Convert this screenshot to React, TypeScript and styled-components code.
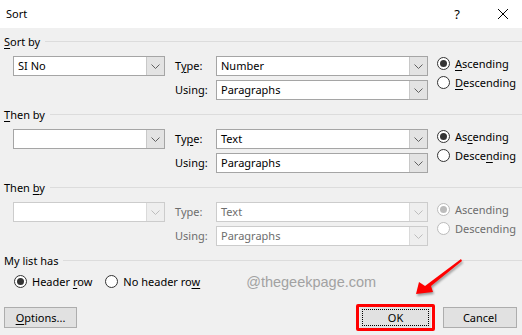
import { FunctionComponent, ReactNode } from 'react'
import styled, { createGlobalStyle } from 'styled-components'

const GlobalStyle = createGlobalStyle`
  html, body { margin: 0; padding: 0; background: #f0f0f0; }
  body { font-family: 'Noto Sans', 'Open Sans', sans-serif; font-size: 11px; color: #000; }
`

const Dialog = styled.div`
  position: relative;
  width: 522px;
  height: 335px;
  background: #f0f0f0;
  overflow: hidden;
`

const TitleBar = styled.div`
  height: 28px;
  background: #fff;
  display: flex;
  align-items: center;
  padding-left: 6px;
  box-sizing: border-box;
`

const TitleText = styled.div`
  flex: 1;
  line-height: 14px;
`

const TitleButton = styled.div<{ $mr: number }>`
  width: 16px;
  height: 16px;
  display: flex;
  align-items: center;
  justify-content: center;
  margin-right: ${(p) => p.$mr}px;
  font-size: 13px;
`

const Body = styled.div`
  padding-top: 7px;
`

const Section = styled.div`
  margin-bottom: 8px;
`

const GroupHeader = styled.div`
  display: flex;
  align-items: center;
  height: 14px;
  padding-left: 4px;
  margin-bottom: 7px;
  line-height: 14px;
  white-space: nowrap;
  &::after {
    content: '';
    flex: 1;
    height: 1px;
    background: #dcdcdc;
    margin-left: 5px;
    margin-top: -1px;
  }
`

const KeyRow = styled.div`
  display: grid;
  grid-template-columns: 161px 42px 212px auto;
  grid-template-rows: 20px 20px;
  row-gap: 4px;
  padding-left: 13px;
  align-items: center;
`

const FieldLabel = styled.div<{ $disabled?: boolean }>`
  color: ${(p) => (p.$disabled ? '#6d6d6d' : '#000')};
  padding-left: 1px;
  line-height: 14px;
`

const Combo = styled.div<{ $disabled?: boolean; $w?: number }>`
  display: flex;
  width: ${(p) => (p.$w ? `${p.$w}px` : 'auto')};
  height: 20px;
  box-sizing: border-box;
  border: 1px solid ${(p) => (p.$disabled ? '#cccccc' : '#a5a5a5')};
  background: #fff;
  color: ${(p) => (p.$disabled ? '#6d6d6d' : '#000')};
`

const ComboText = styled.div`
  flex: 1;
  padding-left: 4px;
  line-height: 18px;
  white-space: nowrap;
  overflow: hidden;
`

const ComboArrow = styled.div<{ $disabled?: boolean }>`
  width: 17px;
  display: flex;
  align-items: center;
  justify-content: center;
  background: ${(p) => (p.$disabled ? '#eeeeee' : '#e3e3e3')};
  border-left: 1px solid ${(p) => (p.$disabled ? '#dadada' : '#c8c8c8')};
`

const RadioCol = styled.div`
  grid-column: 4;
  grid-row: 1 / span 2;
  align-self: start;
  display: flex;
  flex-direction: column;
  gap: 5px;
  margin-left: 9px;
`

const RadioItem = styled.div<{ $disabled?: boolean }>`
  display: flex;
  align-items: center;
  height: 14px;
  gap: 5px;
  white-space: nowrap;
  color: ${(p) => (p.$disabled ? '#6d6d6d' : '#000')};
`

const RadioCircle = styled.div<{ $checked?: boolean; $disabled?: boolean }>`
  width: 13px;
  height: 13px;
  box-sizing: border-box;
  border-radius: 50%;
  border: 1px solid ${(p) => (p.$disabled ? '#bcbcbc' : '#333')};
  background: #fff;
  display: flex;
  align-items: center;
  justify-content: center;
  flex: none;
  &::after {
    content: '';
    width: 7px;
    height: 7px;
    border-radius: 50%;
    background: ${(p) => (p.$disabled ? '#bcbcbc' : '#333')};
    display: ${(p) => (p.$checked ? 'block' : 'none')};
  }
`

const Key = styled.span`
  text-decoration: underline;
  text-underline-offset: 2px;
`

const ListRow = styled.div`
  display: flex;
  align-items: center;
  padding-left: 14px;
  gap: 13px;
  height: 14px;
  margin-top: -1px;
`

const Watermark = styled.div`
  margin-left: 33px;
  font-family: 'Liberation Sans', Arial, sans-serif;
  font-size: 14.5px;
  color: #a2a2a2;
  margin-top: 1px;
`

const Footer = styled.div`
  display: flex;
  align-items: center;
  padding: 0 5px 0 4px;
  margin-top: 16px;
`

const Button = styled.div<{ $w: number }>`
  width: ${(p) => p.$w}px;
  height: 21px;
  box-sizing: border-box;
  border: 1px solid #adadad;
  background: #e1e1e1;
  display: flex;
  align-items: center;
  justify-content: center;
  line-height: 14px;
`

const Spacer = styled.div`
  flex: 1;
`

const Highlight = styled.div`
  border: 3px solid #ff0000;
  border-radius: 2px;
  padding: 0 1px;
  margin-right: 8px;
`

const FocusButton = styled(Button)`
  border-color: #e1e1e1;
  position: relative;
  &::before {
    content: '';
    position: absolute;
    inset: 1px;
    border: 1px dotted #000;
  }
`

const Arrow = styled.svg`
  position: absolute;
  left: 400px;
  top: 250px;
  filter: drop-shadow(1px 2px 1px rgba(0, 0, 0, 0.35));
`

const Chevron: FunctionComponent<{ disabled?: boolean }> = ({ disabled }) => (
  <svg width="9" height="5" viewBox="0 0 9 5">
    <path d="M0.5 0.5 L4.5 4.5 L8.5 0.5" fill="none" stroke={disabled ? '#bdbdbd' : '#606060'} strokeWidth="1" />
  </svg>
)

const ComboBox: FunctionComponent<{ value: string; disabled?: boolean; width?: number }> = ({
  value,
  disabled,
  width,
}) => (
  <Combo $disabled={disabled} $w={width}>
    <ComboText>{value}</ComboText>
    <ComboArrow $disabled={disabled}>
      <Chevron disabled={disabled} />
    </ComboArrow>
  </Combo>
)

const Radio: FunctionComponent<{ checked?: boolean; disabled?: boolean; children: ReactNode }> = ({
  checked,
  disabled,
  children,
}) => (
  <RadioItem $disabled={disabled}>
    <RadioCircle $checked={checked} $disabled={disabled} />
    <span>{children}</span>
  </RadioItem>
)

const SortKey: FunctionComponent<{
  title: ReactNode
  column: string
  type: string
  typeLabel: ReactNode
  asc: ReactNode
  desc: ReactNode
  disabled?: boolean
}> = ({ title, column, type, typeLabel, asc, desc, disabled }) => (
  <Section>
    <GroupHeader>
      <span>{title}</span>
    </GroupHeader>
    <KeyRow>
      <ComboBox value={column} disabled={disabled} width={152} />
      <FieldLabel $disabled={disabled}>{typeLabel}</FieldLabel>
      <ComboBox value={type} disabled={disabled} />
      <RadioCol>
        <Radio checked disabled={disabled}>
          {asc}
        </Radio>
        <Radio disabled={disabled}>{desc}</Radio>
      </RadioCol>
      <div />
      <FieldLabel $disabled={disabled}>Using:</FieldLabel>
      <ComboBox value="Paragraphs" disabled={disabled} />
    </KeyRow>
  </Section>
)

export default function App() {
  return (
    <Dialog>
      <GlobalStyle />
      <TitleBar>
        <TitleText>Sort</TitleText>
        <TitleButton $mr={30}>?</TitleButton>
        <TitleButton $mr={11}>
          <svg width="12" height="12" viewBox="0 0 12 12">
            <path d="M1 1 L11 11 M11 1 L1 11" stroke="#000" strokeWidth="1" />
          </svg>
        </TitleButton>
      </TitleBar>

      <Body>
        <SortKey
          title={
            <>
              <Key>S</Key>ort by
            </>
          }
          column="SI No"
          type="Number"
          typeLabel={
            <>
              T<Key>y</Key>pe:
            </>
          }
          asc={
            <>
              <Key>A</Key>scending
            </>
          }
          desc={
            <>
              <Key>D</Key>escending
            </>
          }
        />
        <SortKey
          title={
            <>
              <Key>T</Key>hen by
            </>
          }
          column=""
          type="Text"
          typeLabel={
            <>
              Ty<Key>p</Key>e:
            </>
          }
          asc={
            <>
              As<Key>c</Key>ending
            </>
          }
          desc={
            <>
              Desce<Key>n</Key>ding
            </>
          }
        />
        <SortKey
          title={
            <>
              Then <Key>b</Key>y
            </>
          }
          column=""
          type="Text"
          typeLabel="Type:"
          asc="Ascending"
          desc="Descending"
          disabled
        />

        <GroupHeader>
          <span>My list has</span>
        </GroupHeader>
        <ListRow>
          <Radio checked>
            Header <Key>r</Key>ow
          </Radio>
          <Radio>
            No header ro<Key>w</Key>
          </Radio>
          <Watermark>@thegeekpage.com</Watermark>
        </ListRow>

        <Footer>
          <Button $w={73}>
            <span>
              <Key>O</Key>ptions...
            </span>
          </Button>
          <Spacer />
          <Highlight>
            <FocusButton $w={71}>OK</FocusButton>
          </Highlight>
          <Button $w={74}>Cancel</Button>
        </Footer>
      </Body>

      <Arrow width="70" height="50" viewBox="0 0 70 50">
        <path d="M61 9 L62 11 L31 36 L33 42 L16 44 L19 32 L25 36 Z" fill="#ff0000" />
      </Arrow>
    </Dialog>
  )
}
